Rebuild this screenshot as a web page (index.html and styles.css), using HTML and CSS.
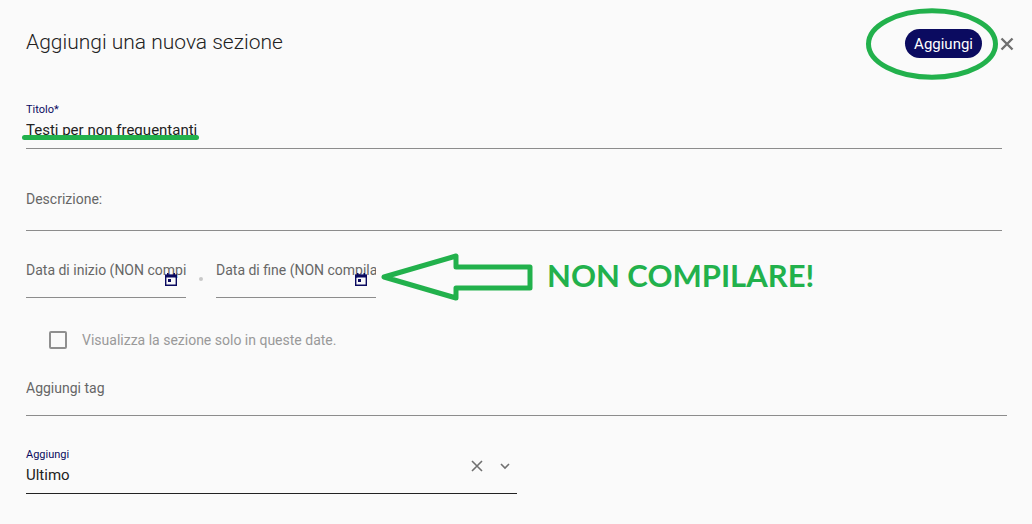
FILE: index.html
```html
<!DOCTYPE html>
<html lang="it">
<head>
<meta charset="utf-8">
<meta name="viewport" content="width=device-width, initial-scale=1">
<title>Aggiungi una nuova sezione</title>
<link rel="stylesheet" href="styles.css">
</head>
<body>
<form class="dialog">
  <header class="header">
    <h1 class="title">Aggiungi una nuova sezione</h1>
    <div class="submit-wrap">
      <button class="submit" type="button">Aggiungi</button>
      <svg class="ring" viewBox="0 0 134 72" aria-hidden="true"><ellipse cx="67" cy="36" rx="63.5" ry="33.3"/></svg>
    </div>
    <button class="icon-button" type="button" aria-label="Chiudi">
      <svg class="close-icon" viewBox="0 0 14 14"><path d="M1.500 1.500l11 11M12.500 1.500l-11 11"/></svg>
    </button>
  </header>

  <div class="field field-title">
    <label class="label-small" for="titolo">Titolo*</label>
    <input class="value" id="titolo" type="text" value="Testi per non frequentanti">
    <span class="marker"></span>
  </div>

  <div class="field field-description">
    <label class="label" for="descrizione">Descrizione:</label>
    <input class="empty" id="descrizione" type="text">
  </div>

  <div class="dates">
    <div class="field date">
      <label class="label" for="inizio">Data di inizio (NON compilare)</label>
      <input class="empty" id="inizio" type="text">
      <button class="calendar" type="button" aria-label="Scegli la data di inizio">
        <svg viewBox="0 0 12 13"><path class="frame" d="M.7 2.500h10.600v9.800H.7z"/><path class="fill" d="M0 1.500h12v3H0zM2 0h1.500v2H2zM8.500 0H10v2H8.500zM3 6h3v3H3z"/></svg>
      </button>
    </div>
    <span class="dot"></span>
    <div class="field date">
      <label class="label" for="fine">Data di fine (NON compilare)</label>
      <input class="empty" id="fine" type="text">
      <button class="calendar" type="button" aria-label="Scegli la data di fine">
        <svg viewBox="0 0 12 13"><path class="frame" d="M.7 2.500h10.600v9.800H.7z"/><path class="fill" d="M0 1.500h12v3H0zM2 0h1.500v2H2zM8.500 0H10v2H8.500zM3 6h3v3H3z"/></svg>
      </button>
    </div>
    <div class="note">
      <svg class="arrow" viewBox="0 0 152 48" aria-hidden="true"><path d="M3 24L75 3v11h74v21H75v10z"/></svg>
      <strong class="note-text">NON COMPILARE!</strong>
    </div>
  </div>

  <div class="check-row">
    <input class="checkbox" id="solo-date" type="checkbox" disabled>
    <label class="check-label" for="solo-date">Visualizza la sezione solo in queste date.</label>
  </div>

  <div class="field field-tag">
    <label class="label" for="tag">Aggiungi tag</label>
    <input class="empty" id="tag" type="text">
  </div>

  <div class="field field-position">
    <label class="label-small" for="posizione">Aggiungi</label>
    <select class="value" id="posizione"><option>Ultimo</option></select>
    <div class="select-icons">
      <button class="icon-button" type="button" aria-label="Cancella">
        <svg class="clear-icon" viewBox="0 0 14 14"><path d="M2 2l10 10M12 2L2 12"/></svg>
      </button>
      <svg class="chevron" viewBox="0 0 14 14" aria-hidden="true"><path d="M3 5l4 4 4-4"/></svg>
    </div>
  </div>
</form>
</body>
</html>
```
FILE: styles.css
```css
* {
  box-sizing: border-box;
}

body {
  margin: 0;
  background: #fafafa;
  color: #222;
  font: 14px/20px Roboto, "Noto Sans", sans-serif;
}

input,
select,
button {
  margin: 0;
  padding: 0;
  border: 0;
  border-radius: 0;
  background: none;
  color: inherit;
  font: inherit;
}

svg {
  display: block;
  fill: none;
}

.dialog {
  padding: 24px 30px 30px 26px;
}

.header {
  display: flex;
  align-items: center;
  margin-right: -12px;
  height: 39px;
}

.title {
  flex: 1;
  margin: 0;
  padding-bottom: 4px;
  font-size: 21px;
  font-weight: 300;
  line-height: 32px;
}

.submit-wrap {
  position: relative;
  margin-right: 18px;
}

.submit {
  display: block;
  height: 29px;
  padding: 0 9px;
  border-radius: 15px;
  background: #0b0b60;
  color: #fff;
  font-size: 15px;
}

.ring {
  position: absolute;
  top: -21px;
  right: -17px;
  width: 134px;
  height: 72px;
  stroke: #22b14c;
  stroke-width: 5;
  pointer-events: none;
}

.icon-button {
  display: block;
}

.close-icon,
.clear-icon,
.chevron {
  width: 14px;
  height: 14px;
  stroke: #707070;
  stroke-width: 1.6;
}

.close-icon {
  stroke-width: 2.4;
}

.field {
  position: relative;
  display: flex;
  flex-direction: column;
  border-bottom: 1px solid #8c8c8c;
}

.label-small {
  color: #0b0b60;
  font-size: 11px;
  line-height: 18px;
}

.label {
  overflow: hidden;
  color: #666;
  font-size: 14px;
  white-space: nowrap;
}

.value {
  height: 29px;
  padding-bottom: 7px;
  appearance: none;
  outline: none;
  font-size: 15px;
}

.empty {
  width: 100%;
  height: 17px;
  outline: none;
}

.field-title {
  margin-top: 38px;
}

.marker {
  position: absolute;
  left: -4px;
  bottom: 8px;
  width: 177px;
  height: 5px;
  border-radius: 3px;
  background: #22b14c;
}

.field-description {
  margin-top: 40px;
  padding-bottom: 4px;
}

.dates {
  display: flex;
  margin-top: 29px;
}

.date {
  width: 160px;
}

.dot {
  align-self: center;
  width: 4px;
  height: 4px;
  margin: 0 13px;
  border-radius: 50%;
  background: #c8c8c8;
}

.calendar {
  position: absolute;
  right: 9px;
  bottom: 11px;
  width: 12px;
  height: 13px;
}

.frame {
  stroke: #0b0b60;
  stroke-width: 1.4;
}

.fill {
  fill: #0b0b60;
}

.note {
  display: flex;
  align-items: center;
  gap: 14px;
  height: 34px;
  margin-left: 5px;
}

.arrow {
  width: 152px;
  height: 48px;
  stroke: #22b14c;
  stroke-width: 5;
  stroke-linejoin: round;
}

.note-text {
  padding-bottom: 4px;
  color: #22b14c;
  font: bold 31px/38px Lato, sans-serif;
  white-space: nowrap;
}

.check-row {
  display: flex;
  align-items: center;
  gap: 15px;
  margin: 32px 0 0 23px;
}

.checkbox {
  width: 18px;
  height: 18px;
  border: 2px solid #8f8f8f;
  border-radius: 2px;
  appearance: none;
}

.check-label {
  color: #999;
}

.field-tag {
  margin: 28px -5px 0 0;
}

.field-position {
  width: calc(50% + 3px);
  margin-top: 30px;
  border-color: #222;
}

.select-icons {
  position: absolute;
  right: 5px;
  bottom: 20px;
  display: flex;
  gap: 14px;
}
```
